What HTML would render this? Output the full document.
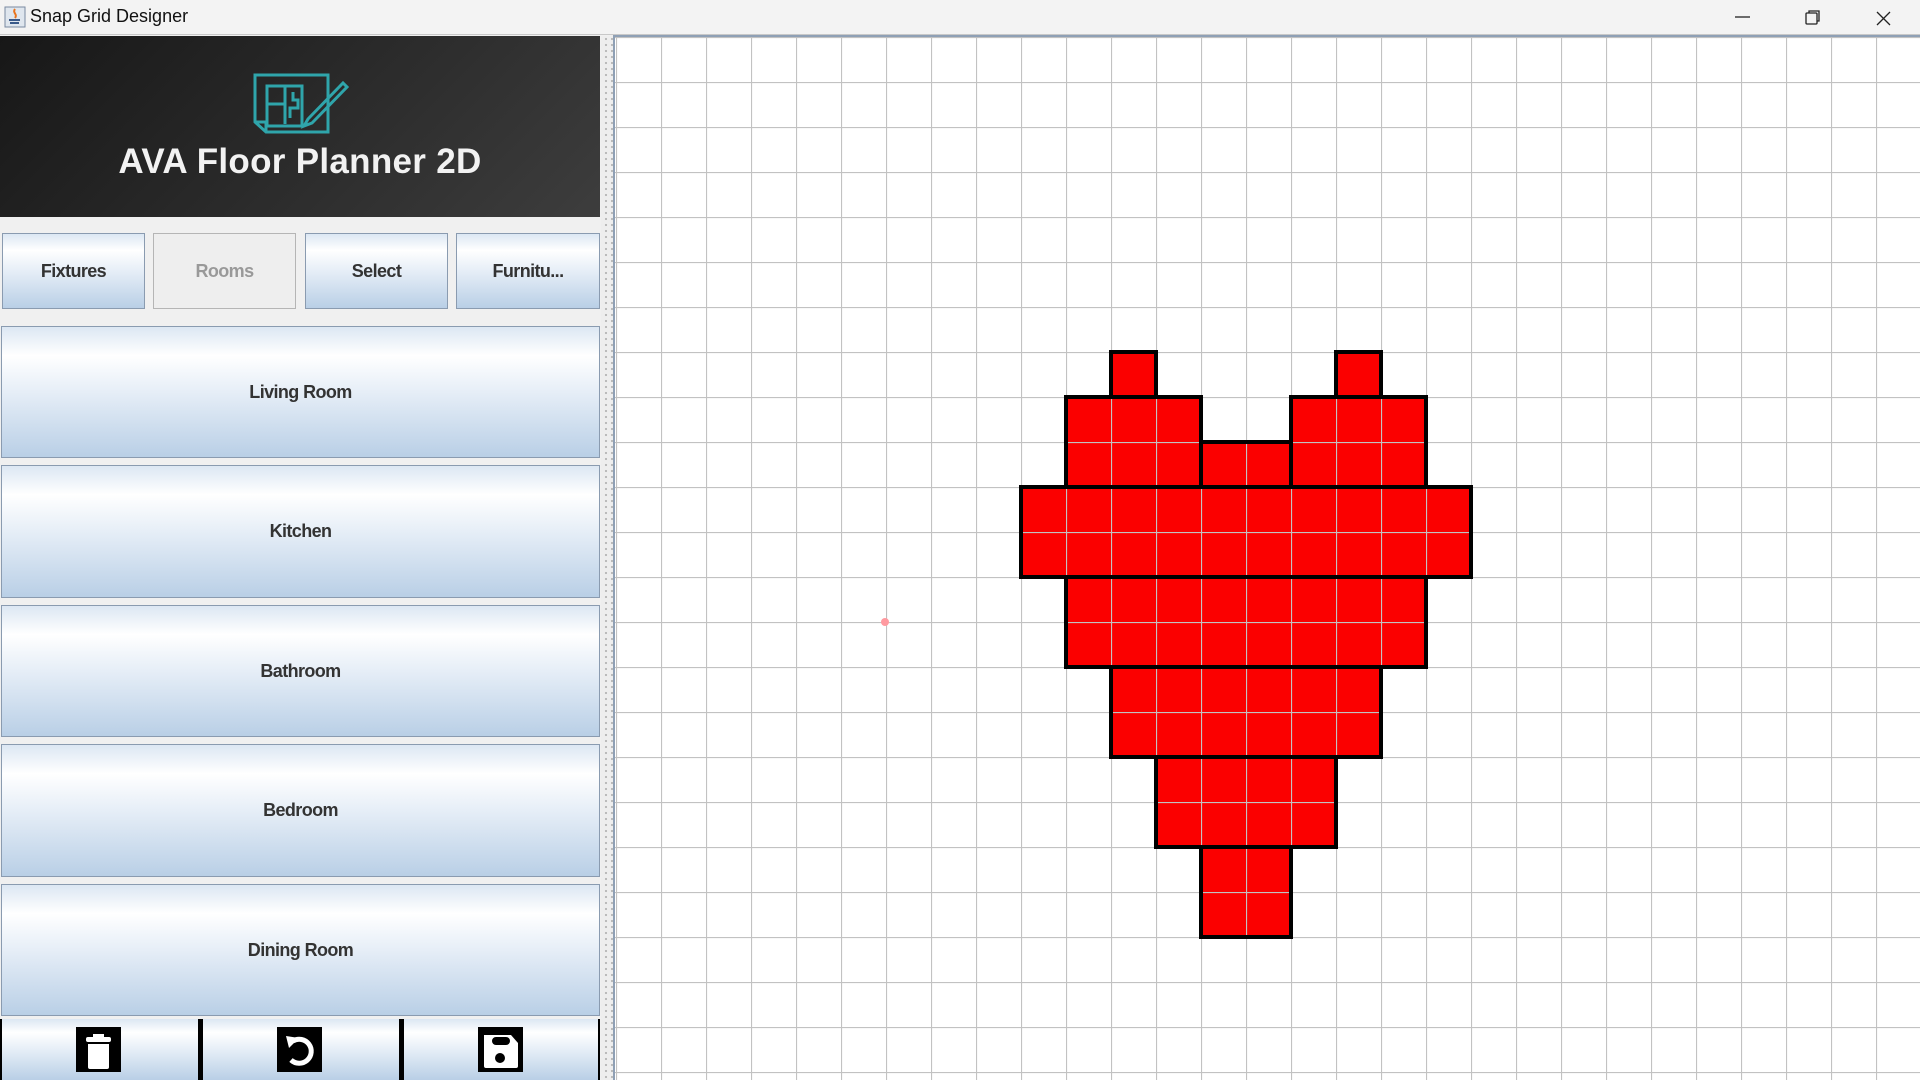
<!DOCTYPE html>
<html><head><meta charset="utf-8"><style>
*{margin:0;padding:0;box-sizing:border-box}
body{width:1920px;height:1080px;overflow:hidden;background:#f0f0f0;font-family:"Liberation Sans",sans-serif;position:relative}
.tb{position:absolute;left:0;top:0;width:1920px;height:35px;background:#f3f3f3;border-bottom:1px solid #c8c8c8}
.tb .t{position:absolute;left:30px;top:6px;font-size:18px;color:#111}
.hdr{position:absolute;left:0;top:36px;width:600px;height:181px;background:linear-gradient(135deg,#171717 0%,#2a2a2a 50%,#3d3d3d 100%)}
.hdr .ttl{position:absolute;left:0;width:600px;top:106px;text-align:center;color:#f2f2f2;font-weight:bold;font-size:35px;letter-spacing:0.3px}
.btn{position:absolute;border:1px solid #8a9bb0;background:linear-gradient(#dce7f3 0%,#ffffff 22%,#e6eef7 50%,#b9cfe6 100%);display:flex;align-items:center;justify-content:center;font-weight:bold;font-size:18px;color:#333;letter-spacing:-0.6px}
.dis{background:#eeeeee;border:1px solid #b5b5b5;color:#999}
.split{position:absolute;left:601px;top:36px;width:12px;height:1044px;background:#eeeeee;background-image:radial-gradient(#b8b8b8 1px,transparent 1.3px);background-size:6px 6px;background-position:2px 0}
.bar{position:absolute;left:0;top:1019px;width:600px;height:61px;background:linear-gradient(#dce7f3 0%,#ffffff 22%,#e6eef7 50%,#b9cfe6 100%)}
.sep{position:absolute;top:1019px;width:5px;height:61px;background:#000}
.ic{position:absolute;top:1027px;width:45px;height:45px;background:#000}
</style></head><body>
<div class="tb"><svg style="position:absolute;left:4px;top:6px" width="22" height="22"><rect x="1" y="1" width="20" height="20" fill="#dfe6ee" stroke="#7a8aa0"/><path d="M11 3c-3 4 3 5 0 9" stroke="#e8731c" stroke-width="2" fill="none"/><path d="M5 14h11M6 17h9" stroke="#3a5a8a" stroke-width="2"/></svg><span class="t">Snap Grid Designer</span>
<svg style="position:absolute;left:1735px;top:10px" width="160" height="20"><path d="M0 7h15" stroke="#222" stroke-width="1.3"/><rect x="71" y="3" width="11" height="11" fill="none" stroke="#222" stroke-width="1.3" rx="1"/><path d="M74 3V1h10v10h-2" fill="none" stroke="#222" stroke-width="1.3"/><path d="M142 2l13 13M155 2l-13 13" stroke="#222" stroke-width="1.3"/></svg></div>
<div class="hdr"><svg style="position:absolute;left:250px;top:34px" width="100" height="66" viewBox="250 70 100 66" fill="none" stroke="#2fa5ab" stroke-width="3"><path d="M255 75h73v57h-62l-11-10z"/><path d="M255 122h11v10"/><path d="M267 86h35v40h-35zM267 104h18M285 86v38M293 92v8h5v8h-8v10"/><path d="M308 119l35-36 4 4-35 36-8 3z"/></svg><div class="ttl">AVA Floor Planner 2D</div></div>
<div class="btn" style="left:2px;top:233px;width:143px;height:76px">Fixtures</div>
<div class="btn dis" style="left:153px;top:233px;width:143px;height:76px">Rooms</div>
<div class="btn" style="left:305px;top:233px;width:143px;height:76px">Select</div>
<div class="btn" style="left:456px;top:233px;width:144px;height:76px">Furnitu...</div>
<div class="btn" style="left:1px;top:326px;width:599px;height:132px">Living Room</div>
<div class="btn" style="left:1px;top:465px;width:599px;height:133px">Kitchen</div>
<div class="btn" style="left:1px;top:605px;width:599px;height:132px">Bathroom</div>
<div class="btn" style="left:1px;top:744px;width:599px;height:133px">Bedroom</div>
<div class="btn" style="left:1px;top:884px;width:599px;height:132px">Dining Room</div>
<div class="bar"></div>
<div class="sep" style="left:0;width:2px"></div><div class="sep" style="left:198px"></div><div class="sep" style="left:399px"></div><div class="sep" style="left:598px;width:2px"></div>
<div class="ic" style="left:76px"><svg width="45" height="45"><rect x="10" y="10" width="25" height="5" rx="2" fill="#fff"/><rect x="17" y="7" width="11" height="4" fill="#fff"/><path d="M12 17h21v23q0 2-2 2H14q-2 0-2-2z" fill="#fff"/></svg></div>
<div class="ic" style="left:277px"><svg width="45" height="45"><path d="M16 14a12 12 0 1 1-2 19" fill="none" stroke="#fff" stroke-width="5"/><path d="M9 9l13 2-10 10z" fill="#fff"/></svg></div>
<div class="ic" style="left:478px"><svg width="45" height="45"><path d="M6 8h27l7 8v23q0 2-2 2H8q-2 0-2-2z" fill="#fff"/><rect x="14" y="10" width="18" height="8" rx="4" fill="#000"/><circle cx="22" cy="31" r="5" fill="#000"/></svg></div>
<div class="split"></div>
<svg style="position:absolute;left:613px;top:35px" width="1307" height="1045" viewBox="613 35 1307 1045">
<defs><pattern id="g" x="616" y="37" width="45" height="45" patternUnits="userSpaceOnUse"><path d="M0 0H45M0 0V45" stroke="#c2c2c2" stroke-width="2.2" fill="none"/></pattern></defs>
<rect x="613" y="35" width="1307" height="1045" fill="#fff"/>
<g fill="#fb0000">
<rect x="1111" y="352" width="45" height="45"/><rect x="1336" y="352" width="45" height="45"/>
<rect x="1066" y="397" width="135" height="90"/><rect x="1201" y="442" width="90" height="45"/><rect x="1291" y="397" width="135" height="90"/>
<rect x="1021" y="487" width="450" height="90"/><rect x="1066" y="577" width="360" height="90"/><rect x="1111" y="667" width="270" height="90"/><rect x="1156" y="757" width="180" height="90"/><rect x="1201" y="847" width="90" height="90"/>
</g>
<rect x="613" y="35" width="1307" height="1045" fill="url(#g)"/>
<g fill="none" stroke="#000" stroke-width="4">
<rect x="1111" y="352" width="45" height="45"/><rect x="1336" y="352" width="45" height="45"/>
<rect x="1066" y="397" width="135" height="90"/><rect x="1201" y="442" width="90" height="45"/><rect x="1291" y="397" width="135" height="90"/>
<rect x="1021" y="487" width="450" height="90"/><rect x="1066" y="577" width="360" height="90"/><rect x="1111" y="667" width="270" height="90"/><rect x="1156" y="757" width="180" height="90"/><rect x="1201" y="847" width="90" height="90"/>
</g>
<circle cx="885" cy="622" r="4" fill="#ff9aa0"/>
<path d="M614 35V1080M613 36H1920" stroke="#8fa0b5" stroke-width="2"/>
</svg>
</body></html>
